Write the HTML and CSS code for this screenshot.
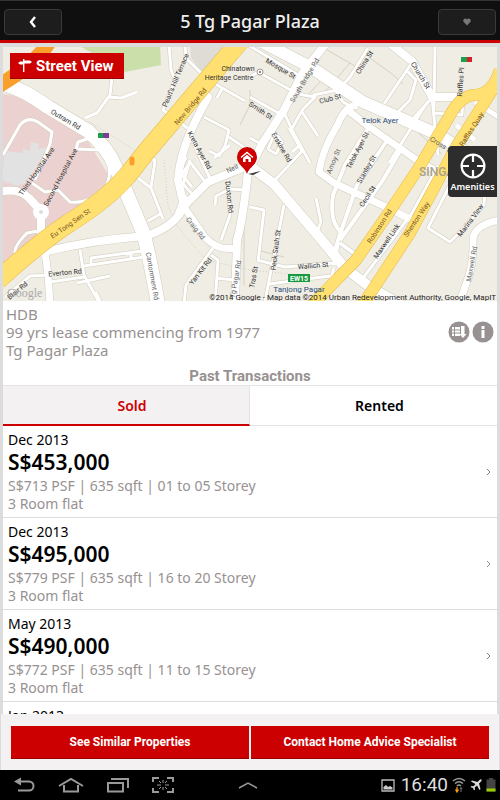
FILE: index.html
```html
<!DOCTYPE html>
<html lang="en">
<head>
  <meta charset="UTF-8" />
  <meta name="viewport" content="width=device-width, initial-scale=1.0"/>
  <title>5 Tg Pagar Plaza</title>
  <link rel="stylesheet" href="styles.css">
</head>
<body>

  <header class="topbar">
    <button class="top-btn" aria-label="Back">
      <svg width="10" height="12" viewBox="0 0 10 12"><path d="M7 1 L3 6 L7 11" fill="none" stroke="#fff" stroke-width="2.4"/></svg>
    </button>
    <h1>5 Tg Pagar Plaza</h1>
    <button class="top-btn" aria-label="Favourite">
      <svg width="8" height="8" viewBox="0 0 8 8"><path d="M4 7.5 L.8 4 A2 2 0 0 1 4 1.4 A2 2 0 0 1 7.2 4 Z" fill="#777"/></svg>
    </button>
  </header>

  <main class="content">
    <section class="map">
      <svg class="map-art" viewBox="3 47 494 254" preserveAspectRatio="xMidYMid slice">
        <defs>
          <g id="streets">
            <path class="w14" d="M0 83 Q22 88 48 107 L88 131 Q108 148 116 168 L143 232 Q150 258 158 304"/>
            <path class="w8" d="M40 253 Q90 240 146 236 Q176 226 184 206 L208 182 Q232 172 250 165"/>
            <path class="w8" d="M327 42 L302 74 L284 110 L262 144 L248 172 Q242 225 237 240 L235 304"/>
            <path class="w12" d="M262 42 L312 68 L363 102 L437 134 L470 155"/>
            <path class="w8" d="M388 42 L412 61 L432 97 L466 97"/>
            <path class="w10" d="M250 166 L274 184 L315 232 L345 268 L370 287 L400 304"/>
            <path class="w7" d="M358 106 Q346 104 338 124 Q322 150 319 172 L334 183 L384 206 L412 220"/>
            <path class="w7" d="M345 108 L368 126 L414 158 L448 178"/>
            <path class="w8" d="M178 216 L183 203 M184 206 L178 180 Q180 150 200 112 L208 97 L200 92 L190 87"/>
            <path class="w7" d="M184 207 L200 230 Q208 244 222 248 L238 249"/>
            <path class="w7" d="M500 220 Q476 224 473 238 Q474 265 466 284 L459 304"/>
            <path class="w7" d="M45 252 L48 275 L50 304"/>
            <path class="w8" d="M0 192 Q18 187 29 198 L41 211 L41 240"/>
            <path class="w3" d="M3 155 L20 125 Q28 116 38 122 L52 132 L50 144 L35 180"/>
            <path class="w3" d="M32 183 L45 192 L58 190 L70 202 Q88 204 102 192 Q113 178 108 162 L100 150 L76 149 L78 142 L90 138 M38 231 L27 233 Q14 246 15 253"/>
            <path class="w3" d="M112 78 L110 95 L97 113 L85 118 M109 97 L121 98 L137 92"/>
            <path class="w3" d="M169 45 L171 70 L175 80 L163 110 L190 130 L192 140 L212 183"/>
            <path class="w3" d="M185 45 L186 58 L200 72 L208 78 M203 77 L245 101 M222 89 L217 98"/>
            <path class="w3" d="M138 178 L151 188 L163 219 M151 187 L154 168 L155 160 L148 157 M148 221 L160 214 M177 182 L190 162 L206 183 M190 160 L183 184 L195 197 M181 193 L189 200 M186 157 L180 172 L192 187"/>
            <path class="w3" d="M204 117 L229 130 L225 146 L219 156 L209 151 M229 137 L248 150 M214 158 L230 145"/>
            <path class="w3" d="M250 97 L282 115 M250 77 L258 72 L298 94 L315 97 L303 109 L291 130 M250 138 L263 145 M284 112 L292 130 L310 163 M289 128 L302 151 L275 180 M302 112 L318 136 M275 133 L282 142 L276 154 L268 149 Z M292 152 L300 145"/>
            <path class="w3" d="M313 95 L338 90 L350 77 L368 48 M336 91 L343 102 L350 106 M248 45 L300 76 M384 104 L413 61 M406 70 L416 80 L410 100 L395 115"/>
            <path class="w4" d="M370 125 L345 165 L333 195 Q329 225 343 233 M388 139 L357 185 L339 237 L335 250 M403 146 L383 180 L340 240 M340 243 L355 254 M338 242 L334 265"/>
            <path class="w3" d="M408 124 L432 98 L438 155 M435 45 L434 110 M433 113 L462 115 L463 97 M428 101 L389 163 M400 198 L439 134 M423 212 L460 148 M363 278 L412 213 L438 166"/>
            <path class="w5" d="M450 165 L480 184 M456 125 L475 140 M475 102 L500 118"/>
            <path class="w3" d="M455 175 L428 228 L450 242 L460 232 L484 205 L485 190"/>
            <path class="w3" d="M284 205 L265 301 M257 260 L285 267 L335 263 M250 207 L264 210 L258 262 M269 284 L330 276 M334 268 L330 282 M316 198 L321 222 L317 232"/>
            <path class="w3" d="M245 190 L230 189 L216 196 L215 205 M228 180 L230 215 L221 240 M213 248 L186 285 L184 304 M211 255 L218 260 L215 304 M216 278 L234 280"/>
            <path class="w3" d="M80 250 L84 275 L100 304 M84 266 L144 257 M91 265 L91 258 L142 251 M131 252 L131 258 M50 282 L84 277 M77 283 L110 276 M48 275 L30 276 L5 297 M96 292 L101 304"/>
          </g>
          <g id="highways">
            <path class="w18" d="M241 40 L146 152 L127 176 Q106 200 69 223 Q40 242 -2 280"/>
            <path class="w11" d="M500 70 Q492 95 474 95 Q462 96 453 110 L420 166 L388 214 L356 260 L310 307"/>
            <path class="w11" d="M495 86 L456 147 L410 233 L362 306"/>
          </g>
        </defs>

        <rect x="3" y="47" width="494" height="254" fill="#f0ede5"/>
        <path d="M78 45 H160 L161 65 L125 72 Z" fill="#cadfaa"/>
        <path d="M190 45 H228 L204 74 L191 58 Z" fill="#dfdbd5"/>
        <path d="M3 94 L20 96 L85 136 L112 181 L84 204 L42 230 L36 238 L3 264 Z" fill="#ebd2d0"/>
        <path d="M3 168 L5 151 L23 153 L23 149 L30 151 L31 142 L39 144 L38 149 L48 147 L28 182 L17 186 L3 181 Z" fill="#e2e2e2"/>
        <g class="lane">
          <path d="M240 125 L250 105 L250 90 M370 58 L374 61 L392 74 L403 84 M322 47 L360 69 M305 98 L320 82 M410 125 L442 154 M324 93 L350 63 M257 250 L284 257 M244 207 L244 285 M75 203 L80 208"/>
          <path stroke-dasharray="1 2" d="M90 122 L138 152 M164 160 L168 205 L176 225 L206 260 L250 270 L310 276"/>
        </g>

        <use href="#streets" class="street-edge"/>
        <use href="#streets" class="street"/>
        <circle cx="41" cy="212" r="8" fill="#fff"/>
        <circle cx="41" cy="212" r="2" fill="#ddd"/>
        <use href="#highways" class="highway-edge"/>
        <use href="#highways" class="highway"/>
        <path d="M49 42 Q36 64 -2 86" fill="none" stroke="#fb9f2c" stroke-width="15"/>
        <path d="M132 159 L132 163" stroke="#fb9f2c" stroke-width="5" stroke-linecap="round"/>

        <g class="label">
          <text transform="translate(66 119) rotate(31)" text-anchor="middle" dy="3">Outram Rd</text>
          <text transform="translate(190 106) rotate(-50)" text-anchor="middle" dy="3" class="brown">New Bridge Rd</text>
          <text transform="translate(175 80) rotate(-67)" text-anchor="middle" dy="3">Pearl's Hill Terrace</text>
          <text transform="translate(200 150) rotate(61)" text-anchor="middle" dy="3">Kreta Ayer Rd</text>
          <text transform="translate(36 171) rotate(-55)" text-anchor="middle" dy="3">Third Hospital Ave</text>
          <text transform="translate(60 177) rotate(-62)" text-anchor="middle" dy="3">Second Hospital Ave</text>
          <text transform="translate(70 223) rotate(-35)" text-anchor="middle" dy="3" class="brown">Eu Tong Sen St</text>
          <text transform="translate(65 272) rotate(-5)" text-anchor="middle" dy="3">Everton Rd</text>
          <text transform="translate(17 290) rotate(-40)" text-anchor="middle" dy="3">Blair Rd</text>
          <text transform="translate(153 276) rotate(80)" text-anchor="middle" dy="3" class="grey">Cantonment Rd</text>
          <text transform="translate(196 228) rotate(52)" text-anchor="middle" dy="3" class="grey">Craig Rd</text>
          <text transform="translate(200 271) rotate(-52)" text-anchor="middle" dy="3">Yan Kit Rd</text>
          <text transform="translate(230 197) rotate(84)" text-anchor="middle" dy="3">Duxton Rd</text>
          <text transform="translate(232 168) rotate(-25)" text-anchor="middle" dy="3" class="grey">Neil</text>
          <text transform="translate(235 279) rotate(-80)" text-anchor="middle" dy="3" class="grey">Tg Pagar Rd</text>
          <text transform="translate(253 277) rotate(-80)" text-anchor="middle" dy="3">Tras St</text>
          <text transform="translate(275 250) rotate(-83)" text-anchor="middle" dy="3">Peck Seah St</text>
          <text transform="translate(313 265) rotate(-5)" text-anchor="middle" dy="3">Wallich St</text>
          <text transform="translate(282 147) rotate(60)" text-anchor="middle" dy="3">Erskine Rd</text>
          <text transform="translate(261 110) rotate(33)" text-anchor="middle" dy="3">Smith St</text>
          <text transform="translate(281 68) rotate(31)" text-anchor="middle" dy="3">Mosque St</text>
          <text transform="translate(304 80) rotate(-59)" text-anchor="middle" dy="3" class="grey">South Bridge Rd</text>
          <text transform="translate(330 98) rotate(-15)" text-anchor="middle" dy="3">Club St</text>
          <text transform="translate(364 62) rotate(-57)" text-anchor="middle" dy="3">China St</text>
          <text transform="translate(421 75) rotate(58)" text-anchor="middle" dy="3">Church St</text>
          <text transform="translate(460 82) rotate(-86)" text-anchor="middle" dy="3">Raffles Pl</text>
          <text transform="translate(471 129) rotate(-57)" text-anchor="middle" dy="3" class="brown">Raffles Quay</text>
          <text transform="translate(441 144) rotate(32)" text-anchor="middle" dy="3" class="grey">Cross S</text>
          <text transform="translate(333 161) rotate(-67)" text-anchor="middle" dy="3" class="grey">Amoy St</text>
          <text transform="translate(357 150) rotate(-62)" text-anchor="middle" dy="3">Telok Ayer St</text>
          <text transform="translate(366 169) rotate(-60)" text-anchor="middle" dy="3">Stanley St</text>
          <text transform="translate(367 196) rotate(-57)" text-anchor="middle" dy="3">Cecil St</text>
          <text transform="translate(379 226) rotate(-57)" text-anchor="middle" dy="3" class="brown">Robinson Rd</text>
          <text transform="translate(386 241) rotate(-55)" text-anchor="middle" dy="3">Maxwell Link</text>
          <text transform="translate(416 219) rotate(-56)" text-anchor="middle" dy="3" class="brown">Shenton Way</text>
          <text transform="translate(470 220) rotate(-53)" text-anchor="middle" dy="3">Marina View</text>
          <text transform="translate(471 264) rotate(-80)" text-anchor="middle" dy="3" class="grey">Maxwell Rd</text>
          <text x="238" y="71" text-anchor="middle">Chinatown</text>
          <text x="229" y="80" text-anchor="middle">Heritage Centre</text>
          <text x="380" y="123" text-anchor="middle" class="station">Telok Ayer</text>
          <text x="299" y="292" text-anchor="middle" class="station">Tanjong Pagar</text>
          <text x="419" y="176" class="district">SINGAPORE</text>
          <text x="7" y="297" class="google">Google</text>
          <text x="496" y="300" text-anchor="end" class="credit">©2014 Google - Map data ©2014 Urban Redevelopment Authority, Google, MapIT</text>
        </g>

        <circle cx="260" cy="72" r="3" fill="#fff" stroke="#999"/>
        <circle cx="260" cy="72" r="1" fill="#853"/>
        <path d="M98 133 H104 V138 H98 Z M461 57 H467 V62 H461 Z" fill="#1aa04a"/>
        <path d="M103 133 H109 V138 H103 Z" fill="#7b3f98"/>
        <path d="M467 57 H472 V62 H467 Z" fill="#d3202a"/>
        <rect x="288" y="274" width="22" height="8" fill="#159a3f"/>
        <text x="299" y="281" text-anchor="middle" class="line-code">EW15</text>

        <!-- property pin -->
        <path d="M248 174 L261 171 L253 175 Z" fill="#333"/>
        <path d="M247 174 C245 167 237 165 237 157 A10 10 0 0 1 257 157 C257 165 249 167 247 174 Z" fill="#c00"/>
        <path d="M241 157.5 L247 152.5 L253 157.5" fill="none" stroke="#fff" stroke-width="1.4"/>
        <path d="M243 158 L247 154.8 L251 158 V162 H248.4 V159 H245.6 V162 H243 Z" fill="#fff"/>
      </svg>

      <button class="street-view">
        <svg width="14" height="14" viewBox="0 0 14 14"><path d="M5 0 H6.4 V13 H5 Z M0 4 L2 2.5 H6 V5.5 H2 Z M6 1.5 H12 L14 3 L12 4.5 H6 Z" fill="#fff"/></svg>
        Street View
      </button>
      <button class="amenities">
        <svg width="26" height="26" viewBox="0 0 26 26"><circle cx="13" cy="13" r="11.4" fill="none" stroke="#fff" stroke-width="2.2"/><path d="M13 2 V9 M13 17 V24 M2 13 H9 M17 13 H24" stroke="#fff" stroke-width="2.2"/></svg>
        Amenities
      </button>
    </section>

    <section class="info">
      <p>HDB<br>99 yrs lease commencing from 1977<br>Tg Pagar Plaza</p>
      <div class="info-btns">
        <button class="round-btn" aria-label="Price table">
          <svg width="22" height="22" viewBox="0 0 22 22"><circle cx="11" cy="11" r="10.5" fill="#979191"/><path d="M4 6 H12 V15 H4 Z M13 5 H16.5 V13 H18.5 L15 17 L11.5 13 H13 Z" fill="#fff"/><path d="M4 9 H12 M4 12 H12 M6.5 6 V15" stroke="#979191"/></svg>
        </button>
        <button class="round-btn" aria-label="Information">
          <svg width="22" height="22" viewBox="0 0 22 22"><circle cx="11" cy="11" r="10.5" fill="#979191"/><path d="M9.5 5 H12.5 V8 H9.5 Z M9.5 9 H12.5 V17 H9.5 Z" fill="#fff"/></svg>
        </button>
      </div>
    </section>

    <h2>Past Transactions</h2>

    <div class="tabs">
      <button class="tab active">Sold</button>
      <button class="tab">Rented</button>
    </div>

    <ul class="list">
      <li>
        <div>
          <div class="date">Dec 2013</div>
          <div class="price">S$453,000</div>
          <div class="detail">S$713 PSF | 635 sqft | 01 to 05 Storey<br>3 Room flat</div>
        </div>
        <svg class="arrow" viewBox="0 0 5 8"><path d="M1 1 L4 4 L1 7"/></svg>
      </li>
      <li>
        <div>
          <div class="date">Dec 2013</div>
          <div class="price">S$495,000</div>
          <div class="detail">S$779 PSF | 635 sqft | 16 to 20 Storey<br>3 Room flat</div>
        </div>
        <svg class="arrow" viewBox="0 0 5 8"><path d="M1 1 L4 4 L1 7"/></svg>
      </li>
      <li>
        <div>
          <div class="date">May 2013</div>
          <div class="price">S$490,000</div>
          <div class="detail">S$772 PSF | 635 sqft | 11 to 15 Storey<br>3 Room flat</div>
        </div>
        <svg class="arrow" viewBox="0 0 5 8"><path d="M1 1 L4 4 L1 7"/></svg>
      </li>
      <li>
        <div>
          <div class="date">Jan 2013</div>
        </div>
      </li>
    </ul>
  </main>

  <footer class="actions">
    <button>See Similar Properties</button>
    <button>Contact Home Advice Specialist</button>
  </footer>

  <nav class="sysbar">
    <button aria-label="Back"><svg width="22" height="16" viewBox="0 0 22 16"><path d="M3 4.5 H15 A4.5 4.5 0 0 1 15 13.5 H4" fill="none" stroke="#999" stroke-width="2"/><path d="M0 4.5 L7 .5 V8.5 Z" fill="#999"/></svg></button>
    <button aria-label="Home"><svg width="26" height="16" viewBox="0 0 26 16"><path d="M1 9 L13 2 L25 9 M6 8 V14.5 H20 V8" fill="none" stroke="#999" stroke-width="2"/></svg></button>
    <button aria-label="Recent apps"><svg width="24" height="16" viewBox="0 0 24 16"><path d="M2 6 H17 V14.5 H2 Z M5 2 H22 V11" fill="none" stroke="#999" stroke-width="2"/></svg></button>
    <button aria-label="Screenshot"><svg width="22" height="16" viewBox="0 0 22 16"><path d="M1 5 V1 H7 M15 1 H21 V5 M21 11 V15 H15 M7 15 H1 V11" fill="none" stroke="#999" stroke-width="2"/><path d="M11 3 V6 M11 10 V13 M5 8 H9 M13 8 H17 M7 4 L9 6 M15 4 L13 6 M7 12 L9 10 M15 12 L13 10" stroke="#999"/></svg></button>
    <button class="expand" aria-label="Show tray"><svg width="20" height="8" viewBox="0 0 20 8"><path d="M1 7 L10 2 L19 7" fill="none" stroke="#999" stroke-width="1.5"/></svg></button>
    <div class="status">
      <svg width="14" height="13" viewBox="0 0 14 13"><path d="M1 1 H13 V12 H1 Z" fill="none" stroke="#bbb" stroke-width="1.3"/><path d="M2.5 10.5 V8 L5 6 L7 8 L9 7 L11.5 8.5 V10.5 Z" fill="#ccc"/></svg>
      <span class="clock">16:40</span>
      <svg width="14" height="16" viewBox="0 0 14 16"><path d="M1 4 Q7 -1 13 4 M3 6.5 Q7 3 11 6.5 M5 9 Q7 7 9 9" fill="none" stroke="#999" stroke-width="1.6"/><path d="M5 10 V14 M3.5 12.5 L5 15 L6.5 12.5" fill="none" stroke="#f79a1c" stroke-width="1.3"/><path d="M9 15 V11 M7.8 12 L9 10.5 L10.2 12" fill="none" stroke="#777"/></svg>
      <svg width="12" height="12" viewBox="0 0 12 12"><path d="M11.5 .5 Q10.5 0 9.5 1 L7.5 3 L2 1.5 L1 2.5 L5.5 5 L3.5 7.3 L1.5 7 L.5 8 L3 9 L4 11.5 L5 10.5 L4.7 8.5 L7 6.5 L9.5 11 L10.5 10 L9 4.5 L11 2.5 Q12 1.5 11.5 .5 Z" fill="#ddd"/></svg>
      <svg width="10" height="14" viewBox="0 0 10 14"><path d="M3 0 H7 V1.5 H9.5 V13.5 H.5 V1.5 H3 Z" fill="#444"/><path d="M.5 10.5 H9.5 V13.5 H.5 Z" fill="#9c0"/></svg>
    </div>
  </nav>

</body>
</html>
```
FILE: styles.css
```css
* {
  box-sizing: border-box;
}

body {
  font-family: "Noto Sans", "Open Sans", sans-serif;
  background: #dcdcdc;
  margin: 0;
  height: 100vh;
  display: flex;
  flex-direction: column;
}

button {
  font-family: inherit;
  border: none;
  padding: 0;
  cursor: pointer;
}

svg {
  display: block;
}

.topbar {
  display: flex;
  align-items: center;
  justify-content: space-between;
  height: 43px;
  padding: 0 4px;
  background: #0f0f0f;
  border-top: 1px solid #333;
  border-bottom: 3px solid #c00;
  flex: none;
}

.topbar h1 {
  margin: 0;
  color: #eee;
  font-size: 18px;
  line-height: 24px;
  font-weight: 500;
}

.top-btn {
  display: flex;
  align-items: center;
  justify-content: center;
  width: 58px;
  height: 26px;
  margin-top: 3px;
  background: #1d1d1d;
  border: 1px solid #3a3a3a;
  border-radius: 4px;
}

.content {
  flex: 1;
  min-height: 0;
  display: flex;
  flex-direction: column;
  overflow: hidden;
  margin: 4px 3px 0;
  background: #fff;
}

/* map */
.map {
  position: relative;
  height: 254px;
  flex: none;
  overflow: hidden;
}

.map-art {
  width: 100%;
  height: 100%;
}

.w3 { stroke-width: calc(3px + var(--edge)); }
.w4 { stroke-width: calc(4px + var(--edge)); }
.w5 { stroke-width: calc(5px + var(--edge)); }
.w7 { stroke-width: calc(7px + var(--edge)); }
.w8 { stroke-width: calc(8px + var(--edge)); }
.w10 { stroke-width: calc(10px + var(--edge)); }
.w11 { stroke-width: calc(11px + var(--edge)); }
.w12 { stroke-width: calc(12px + var(--edge)); }
.w14 { stroke-width: calc(14px + var(--edge)); }
.w18 { stroke-width: calc(18px + var(--edge)); }

.street, .street-edge, .highway, .highway-edge {
  fill: none;
  stroke-linejoin: round;
  --edge: 0px;
}

.street { stroke: #fff; }
.street-edge { stroke: #d0cbbd; --edge: 1px; }
.highway { stroke: #ffe070; }
.highway-edge { stroke: #e3bb50; --edge: 1px; }

.lane {
  fill: none;
  stroke: #d6d0c2;
}

.label {
  font-family: Roboto, sans-serif;
  font-size: 7px;
  fill: #333;
}

.label .brown { fill: #7a5420; }
.label .grey { fill: #666; }

.label .station {
  font-size: 8px;
  fill: #2a4d7c;
}

.label .district {
  font-size: 12px;
  font-weight: 500;
  fill: #aaa18c;
}

.label .google {
  font-family: "Liberation Serif", serif;
  font-size: 12px;
  fill: #aaa;
}

.label .credit {
  font-size: 8px;
  fill: #222;
}

.line-code {
  font-family: Roboto, sans-serif;
  font-size: 7px;
  font-weight: bold;
  fill: #fff;
}

.street-view {
  position: absolute;
  left: 7px;
  top: 6px;
  display: flex;
  align-items: center;
  gap: 4px;
  height: 26px;
  padding: 0 10px 0 8px;
  background: #c00;
  border-bottom: 1px solid #900;
  color: #fff;
  font-family: Roboto, sans-serif;
  font-size: 15px;
  font-weight: bold;
}

.amenities {
  position: absolute;
  right: 0;
  top: 99px;
  display: flex;
  flex-direction: column;
  align-items: center;
  gap: 2px;
  width: 49px;
  height: 51px;
  padding-top: 7px;
  background: #2d2d2d;
  border-radius: 4px 0 0 4px;
  color: #fff;
  font-size: 9px;
  line-height: 12px;
  font-weight: 600;
}

/* property info */
.info {
  display: flex;
  align-items: center;
  justify-content: space-between;
  padding: 4px 3px 0;
  color: #979191;
}

.info p {
  margin: 0;
  font-size: 15px;
  line-height: 18px;
}

.info-btns {
  display: flex;
  gap: 2px;
}

.round-btn {
  background: none;
}

h2 {
  margin: 8px 0 0;
  text-align: center;
  color: #979191;
  font-family: Roboto, sans-serif;
  font-size: 15px;
  line-height: 18px;
  font-weight: bold;
}

.tabs {
  display: flex;
  flex: none;
  height: 41px;
  border-top: 1px solid #e4e4e4;
}

.tab {
  width: 50%;
  padding-left: 12px;
  background: #fff;
  border-bottom: 1px solid #e4e4e4;
  color: #000;
  font-size: 14px;
  font-weight: 600;
}

.tab.active {
  background: #f3f1f2;
  border-bottom: 2px solid #c00;
  border-right: 1px solid #e4e4e4;
  color: #c00;
}

.list {
  list-style: none;
  margin: 0;
  padding: 0;
}

.list li {
  display: flex;
  align-items: center;
  justify-content: space-between;
  padding: 5px 6px 4px 5px;
  border-bottom: 1px solid #ddd;
}

.date {
  font-size: 14px;
  line-height: 18px;
}

.price {
  font-size: 21px;
  line-height: 26px;
  font-weight: 600;
}

.detail {
  margin-top: 2px;
  color: #979191;
  font-size: 14px;
  line-height: 18px;
}

.arrow {
  width: 5px;
  height: 8px;
  fill: none;
  stroke: #888;
}

/* bottom buttons */
.actions {
  display: flex;
  gap: 2px;
  flex: none;
  margin: 0 1px;
  padding: 12px 10px 11px;
  background: #f3f1f2;
}

.actions button {
  flex: 1;
  height: 33px;
  background: #c00;
  border-bottom: 1px solid #900;
  color: #fff;
  font-family: Roboto, sans-serif;
  font-size: 12px;
  font-weight: bold;
}

.sysbar {
  display: flex;
  align-items: center;
  gap: 22px;
  flex: none;
  height: 30px;
  padding: 0 4px 0 14px;
  background: #000;
}

.sysbar button {
  background: none;
}

.sysbar .expand {
  margin-left: 42px;
}

.status {
  display: flex;
  align-items: center;
  gap: 4px;
  margin-left: auto;
}

.clock {
  color: #ddd;
  font-family: Roboto, sans-serif;
  font-size: 19px;
  line-height: 24px;
  padding-left: 2px;
}
```
